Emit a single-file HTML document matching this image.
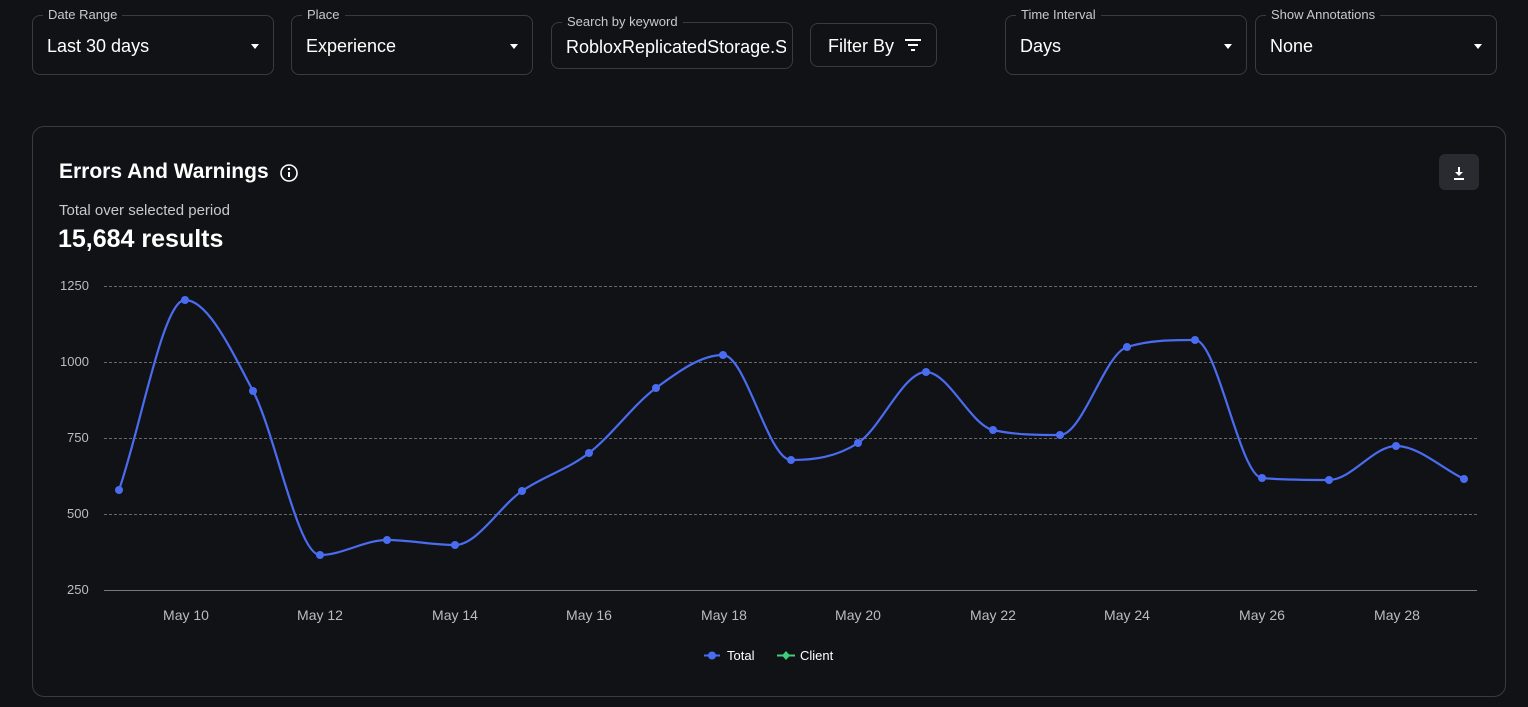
<!DOCTYPE html>
<html><head><meta charset="utf-8"><style>
body{margin:0;width:1528px;height:707px;background:#111216;font-family:"Liberation Sans",sans-serif;color:#fff;overflow:hidden;position:relative}
.f{position:absolute;top:15px;height:60px;border:1px solid #393b40;border-radius:8px;box-sizing:border-box}
.f .l{position:absolute;top:-9px;left:10px;padding:0 5px;background:#111216;font-size:13px;color:#c8c9cc}
.f .v{position:absolute;left:14px;top:20px;font-size:18px}
.f .c{position:absolute;right:14px;top:28px;width:0;height:0;border-left:4px solid transparent;border-right:4px solid transparent;border-top:5px solid #fff}
.card{position:absolute;left:32px;top:126px;width:1474px;height:571px;border:1px solid #393b40;border-radius:12px;box-sizing:border-box}
.ax{position:absolute;font-size:13px;color:#bbbcbf}
</style></head><body>
<div class="f" style="left:32px;width:242px"><span class="l">Date Range</span><span class="v">Last 30 days</span><span class="c"></span></div>
<div class="f" style="left:291px;width:242px"><span class="l">Place</span><span class="v">Experience</span><span class="c"></span></div>
<div class="f" style="left:551px;width:242px;top:22px;height:47px"><span class="l">Search by keyword</span><span class="v" style="top:14px;width:220px;overflow:hidden;white-space:nowrap">RobloxReplicatedStorage.S</span></div>
<div class="f" style="left:810px;width:127px;top:23px;height:44px"><span class="v" style="left:17px;top:12px">Filter By</span>
<svg style="position:absolute;left:93px;top:14px" width="18" height="14"><path d="M1 2H17M4 7H14M7 12H11" stroke="#fff" stroke-width="2"/></svg></div>
<div class="f" style="left:1005px;width:242px"><span class="l">Time Interval</span><span class="v">Days</span><span class="c"></span></div>
<div class="f" style="left:1255px;width:242px"><span class="l">Show Annotations</span><span class="v">None</span><span class="c"></span></div>
<div class="card"></div>
<div style="position:absolute;left:59px;top:160px;font-size:21px;font-weight:bold">Errors And Warnings</div>
<svg style="position:absolute;left:279px;top:163px" width="20" height="20"><circle cx="10" cy="10" r="8" fill="none" stroke="#fff" stroke-width="1.6"/><path d="M10 9V14" stroke="#fff" stroke-width="2"/><circle cx="10" cy="6" r="1.2" fill="#fff"/></svg>
<div style="position:absolute;left:1439px;top:154px;width:40px;height:36px;background:#2a2b30;border-radius:6px"></div>
<svg style="position:absolute;left:1451px;top:165px" width="16" height="16"><path d="M8 2V9" stroke="#fff" stroke-width="2"/><path d="M4 7L8 11L12 7Z" fill="#fff"/><path d="M3 14H13" stroke="#fff" stroke-width="2"/></svg>
<div style="position:absolute;left:59px;top:202px;font-size:15px;color:#c8c9cc">Total over selected period</div>
<div style="position:absolute;left:58px;top:225px;font-size:25px;font-weight:bold">15,684 results</div>
<div class="ax" style="left:60px;top:278px">1250</div>
<div class="ax" style="left:60px;top:354px">1000</div>
<div class="ax" style="left:67px;top:430px">750</div>
<div class="ax" style="left:67px;top:506px">500</div>
<div class="ax" style="left:67px;top:582px">250</div>
<svg id="ch" style="position:absolute;left:0;top:0" width="1528" height="707">
<g stroke="#66676b" stroke-dasharray="3,2" stroke-width="1"><path d="M104 286.5H1477M104 362.5H1477M104 438.5H1477M104 514.5H1477"/></g>
<path d="M104 590.5H1477" stroke="#77787c"/>
<path id="ln" fill="none" stroke="#4a6cf0" stroke-width="2.2"/><g id="dots" fill="#4a6cf0"></g>
<g fill="#bbbcbf" font-size="14" font-family="Liberation Sans,sans-serif" text-anchor="middle">
<text x="186" y="620">May 10</text><text x="320" y="620">May 12</text><text x="455" y="620">May 14</text><text x="589" y="620">May 16</text><text x="724" y="620">May 18</text><text x="858" y="620">May 20</text><text x="993" y="620">May 22</text><text x="1127" y="620">May 24</text><text x="1262" y="620">May 26</text><text x="1397" y="620">May 28</text></g>
<path d="M704 655.5H720" stroke="#4a6cf0" stroke-width="2"/><circle cx="712" cy="655.5" r="4" fill="#4a6cf0"/>
<path d="M777 655.5H795" stroke="#3ecf7a" stroke-width="2"/><path d="M786 651L790 655.5L786 660L782 655.5Z" fill="#3ecf7a"/>
<g fill="#fff" font-size="13" font-family="Liberation Sans,sans-serif"><text x="727" y="660">Total</text><text x="800" y="660">Client</text></g>
</svg>
<script>
var p=[[119,490],[185,300],[253,391],[320,555],[387,540],[455,545],[522,491],[589,453],[656,388],[723,355],[791,460],[858,443],[926,372],[993,430],[1060,435],[1127,347],[1195,340],[1262,478],[1329,480],[1396,446],[1464,479]];
var n=p.length,s=[],m=[];
for(var i=0;i<n-1;i++)s.push((p[i+1][1]-p[i][1])/(p[i+1][0]-p[i][0]));
m[0]=s[0];m[n-1]=s[n-2];
for(var i=1;i<n-1;i++){if(s[i-1]*s[i]<=0)m[i]=0;else{var a=s[i-1],b=s[i];m[i]=(a+b)/2;var mx=3*Math.min(Math.abs(a),Math.abs(b));if(Math.abs(m[i])>mx)m[i]=Math.sign(m[i])*mx;}}
var d="M"+p[0];
for(var i=0;i<n-1;i++){var h=(p[i+1][0]-p[i][0])/3;
d+=" C"+(p[i][0]+h)+","+(p[i][1]+m[i]*h)+" "+(p[i+1][0]-h)+","+(p[i+1][1]-m[i+1]*h)+" "+p[i+1];}
document.getElementById('ln').setAttribute('d',d);
var g=document.getElementById('dots');p.forEach(function(q){var c=document.createElementNS('http://www.w3.org/2000/svg','circle');c.setAttribute('cx',q[0]);c.setAttribute('cy',q[1]);c.setAttribute('r',4);g.appendChild(c);});
</script>
</body></html>
